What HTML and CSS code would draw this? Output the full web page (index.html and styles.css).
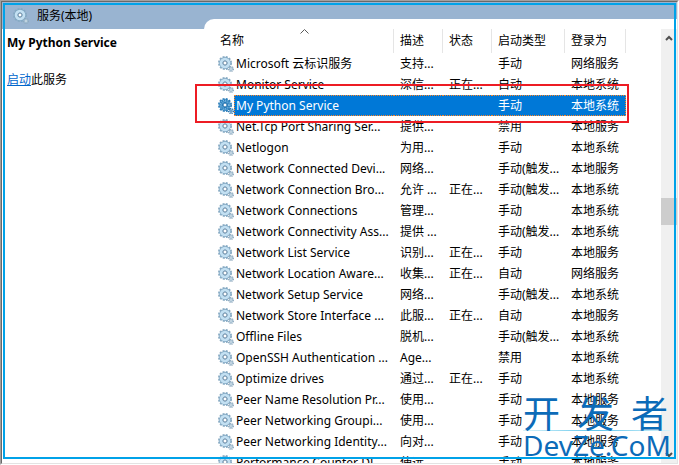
FILE: index.html
```html
<!DOCTYPE html>
<html lang="zh-CN">
<head>
    <meta charset="UTF-8">
    <meta name="viewport" content="width=device-width, initial-scale=1.0">
    <title>服务</title>
    <link rel="stylesheet" href="styles.css">
</head>
<body>
    <svg class="defs" width="0" height="0">
        <symbol id="gears" viewBox="0 0 16 16">
            <circle cx="7" cy="7" r="6.2" fill="none" stroke="#86a9c2" stroke-width="1.6" stroke-dasharray="2 1.25"/>
            <circle cx="7" cy="7" r="4" fill="none" stroke="#7fa6c2" stroke-width="3.8"/>
            <circle cx="7" cy="7" r="3.9" fill="none" stroke="#c3e0f2" stroke-width="2.8"/>
            <circle cx="7" cy="7" r="2" fill="#fff" stroke="#6b8ca8" stroke-width="1"/>
            <circle cx="13" cy="13" r="2.4" fill="none" stroke="#8fa9bd" stroke-width="1.2" stroke-dasharray="1.1 0.78"/>
            <circle cx="13" cy="13" r="1.4" fill="#fff" stroke="#9dbace" stroke-width="1.4"/>
        </symbol>
        <symbol id="gears-selected" viewBox="0 0 16 16">
            <circle cx="7" cy="7" r="6.2" fill="none" stroke="#2d7db9" stroke-width="1.6" stroke-dasharray="2 1.25"/>
            <circle cx="7" cy="7" r="4" fill="none" stroke="#2a80be" stroke-width="3.8"/>
            <circle cx="7" cy="7" r="4.8" fill="none" stroke="#a5d3f0" stroke-width="1" stroke-dasharray="1 1"/>
            <circle cx="7" cy="7" r="3.4" fill="none" stroke="#a5d3f0" stroke-width="1" stroke-dasharray="1 1"/>
            <circle cx="7" cy="7" r="2" fill="#fff" stroke="#1b6ca8" stroke-width="1"/>
            <circle cx="13" cy="13" r="2.4" fill="none" stroke="#2773ac" stroke-width="1.4" stroke-dasharray="1.1 0.78"/>
            <circle cx="13" cy="13" r="1.2" fill="#d6ebf8" stroke="#2b7ab5" stroke-width="1"/>
        </symbol>
    </svg>

    <div class="window">
        <div class="pane">
            <header class="title-bar">
                <svg class="icon"><use href="#gears"/></svg>
                <span>服务(本地)</span>
            </header>
            <div class="content">
                <aside class="details">
                    <h1>My Python Service</h1>
                    <p><a href="#">启动</a>此服务</p>
                </aside>
                <main class="list">
                    <table>
                        <colgroup>
                            <col class="col-name">
                            <col class="col-desc">
                            <col class="col-status">
                            <col class="col-start">
                            <col class="col-logon">
                        </colgroup>
                        <thead>
                            <tr>
                                <th>名称<svg class="sort" viewBox="0 0 9 5"><path d="M.5 4.5l4-4 4 4"/></svg></th>
                                <th>描述</th>
                                <th>状态</th>
                                <th>启动类型</th>
                                <th>登录为</th>
                            </tr>
                        </thead>
                        <tbody id="services"></tbody>
                    </table>
                    <div class="scrollbar">
                        <button type="button" aria-label="向上滚动"><svg viewBox="0 0 8 6"><path d="M1 5l3-3 3 3"/></svg></button>
                        <div class="track"><div class="thumb"></div></div>
                        <button type="button" aria-label="向下滚动"><svg viewBox="0 0 8 6"><path d="M1 1l3 3 3-3"/></svg></button>
                    </div>
                </main>
            </div>
        </div>
        <div class="frame"></div>
        <div class="watermark">
            <div class="watermark-cn"><span>开</span><span>发</span><span>者</span></div>
            <div class="watermark-line"></div>
            <div class="watermark-en">DevZe.CoM</div>
        </div>
    </div>

    <script>
        // name, description, status, startup type, log on as
        const services = [
            ['Microsoft 云标识服务', '支持...', '', '手动', '网络服务'],
            ['Monitor Service', '深信...', '正在...', '自动', '本地系统'],
            ['My Python Service', '', '', '手动', '本地系统'],
            ['Net.Tcp Port Sharing Ser...', '提供...', '', '禁用', '本地服务'],
            ['Netlogon', '为用...', '', '手动', '本地系统'],
            ['Network Connected Devi...', '网络...', '', '手动(触发...', '本地服务'],
            ['Network Connection Bro...', '允许 ...', '正在...', '手动(触发...', '本地系统'],
            ['Network Connections', '管理...', '', '手动', '本地系统'],
            ['Network Connectivity Ass...', '提供 ...', '', '手动(触发...', '本地系统'],
            ['Network List Service', '识别...', '正在...', '手动', '本地服务'],
            ['Network Location Aware...', '收集...', '正在...', '自动', '网络服务'],
            ['Network Setup Service', '网络...', '', '手动(触发...', '本地系统'],
            ['Network Store Interface ...', '此服...', '正在...', '自动', '本地服务'],
            ['Offline Files', '脱机...', '', '手动(触发...', '本地系统'],
            ['OpenSSH Authentication ...', 'Age...', '', '禁用', '本地系统'],
            ['Optimize drives', '通过...', '正在...', '手动', '本地系统'],
            ['Peer Name Resolution Pr...', '使用...', '', '手动', '本地服务'],
            ['Peer Networking Groupi...', '使用...', '', '手动', '本地服务'],
            ['Peer Networking Identity...', '向对...', '', '手动', '本地服务'],
            ['Performance Counter DL...', '使远...', '', '手动', '本地服务']
        ];
        const selected = 'My Python Service';

        const tbody = document.getElementById('services');
        services.forEach(service => {
            const row = tbody.insertRow();
            const isSelected = service[0] === selected;
            if (isSelected) row.className = 'selected';
            service.forEach((text, index) => {
                const cell = row.insertCell(index);
                if (index === 0) {
                    const icon = isSelected ? 'gears-selected' : 'gears';
                    cell.innerHTML = `<div class="name"><svg class="icon"><use href="#${icon}"/></svg><span>${text}</span></div>`;
                    if (isSelected) cell.innerHTML += '<div class="marker"></div>';
                } else {
                    cell.textContent = text;
                }
            });
        });
    </script>
</body>
</html>
```
FILE: styles.css
```css
* {
    box-sizing: border-box;
}

body {
    margin: 0;
    background-color: #fff;
    color: #000;
    font-family: "Noto Sans", "Noto Sans CJK SC", sans-serif;
    font-size: 12px;
    line-height: 20px;
}

.defs {
    position: absolute;
}

.window {
    position: relative;
    height: 100vh;
    overflow: hidden;
    border: 1px solid;
    border-color: #a0a0a0 #fff #fff #a0a0a0;
}

.pane {
    display: flex;
    flex-direction: column;
    height: 100%;
    overflow: hidden;
    border: 1px solid;
    border-color: #696969 #e3e3e3 #e3e3e3 #696969;
}

.icon {
    flex: none;
    width: 16px;
    height: 16px;
}

.title-bar {
    display: flex;
    flex: none;
    align-items: center;
    gap: 8px;
    height: 27px;
    padding-left: 11px;
    background-color: #99b4d1;
}

.content {
    display: flex;
    flex: 1;
    min-height: 0;
}

.details {
    flex: none;
    width: 202px;
    padding: 4px 5px;
}

.details h1 {
    margin: 0 0 17px;
    font-size: 12px;
    line-height: 20px;
}

.details p {
    margin: 0;
}

.details a {
    color: #0066cc;
}

/* the list rises into the title bar with a rounded corner */
.list {
    display: flex;
    flex: 1;
    justify-content: space-between;
    align-items: flex-start;
    margin-top: -10px;
    padding: 10px 0 0 10px;
    border-top-left-radius: 10px;
    background-color: #fff;
}

table {
    flex: none;
    width: 412px;
    table-layout: fixed;
    border-collapse: separate;
    border-spacing: 0;
}

.col-name {
    width: 180px;
}

.col-desc,
.col-status {
    width: 49px;
}

.col-start {
    width: 73px;
}

.col-logon {
    width: 61px;
}

th {
    position: relative;
    height: 24px;
    padding: 0 0 0 6px;
    border-right: 1px solid #e5e5e5;
    font-weight: normal;
    text-align: left;
    white-space: nowrap;
}

.sort {
    position: absolute;
    top: 0;
    left: calc(50% - 4px);
    width: 9px;
    height: 5px;
    fill: none;
    stroke: #5a5a5a;
}

td {
    height: 21px;
    padding: 0 0 0 6px;
    line-height: 19px;
    white-space: nowrap;
}

td:first-child {
    padding-left: 4px;
}

.name {
    display: flex;
    align-items: center;
    height: 21px;
}

.name span {
    flex: 1;
    height: 21px;
    padding: 1px 0 1px 2px;
}

tr.selected {
    position: relative;
    color: #fff;
}

tr.selected .name span,
tr.selected td:not(:first-child) {
    background-color: #0078d7;
    border: 0 dotted #ff8728;
    border-width: 1px 0;
}

tr.selected .name span {
    padding: 0 0 0 1px;
    border-left-width: 1px;
}

tr.selected td:last-child {
    border-right-width: 1px;
}

.marker {
    position: absolute;
    inset: -11px -3px -7px -19px;
    border: 2px solid #ed1c24;
}

.scrollbar {
    display: flex;
    flex: none;
    flex-direction: column;
    width: 16px;
    height: 100%;
    background-color: #f0f0f0;
}

.scrollbar button {
    display: flex;
    flex: none;
    align-items: center;
    justify-content: center;
    height: 17px;
    padding: 0;
    border: none;
    background: none;
}

.scrollbar svg {
    width: 8px;
    height: 6px;
    fill: none;
    stroke: #505050;
    stroke-width: 2;
}

.track {
    display: flex;
    flex: 1;
    flex-direction: column;
    padding-top: 152px;
}

.thumb {
    height: 27px;
    background-color: #cdcdcd;
}

.frame {
    position: absolute;
    inset: 2px 2px 5px 2px;
    border: 2px solid #00a2e8;
    pointer-events: none;
}

.watermark {
    position: absolute;
    right: 8px;
    bottom: 5px;
    width: 147px;
    color: #0c6bb8;
    pointer-events: none;
}

.watermark-cn {
    display: flex;
    justify-content: space-between;
    padding-right: 2px;
    font-size: 37px;
    line-height: 32px;
}

.watermark-line {
    height: 1px;
    background-image: linear-gradient(to right, #d8f2fa, #5cc4ea, #d8f2fa);
}

.watermark-en {
    font-size: 28px;
    line-height: 28px;
    white-space: nowrap;
}
```
